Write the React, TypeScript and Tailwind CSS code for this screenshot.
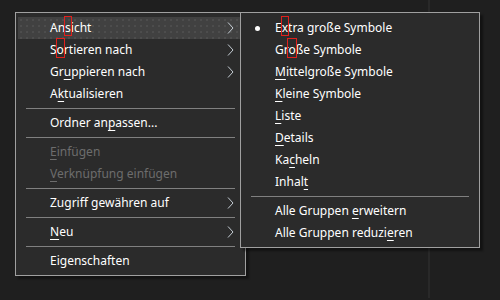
type Item =
	| { sep: true }
	| {
			sep?: false
			label: string
			key?: number
			marked?: boolean
			sub?: boolean
			disabled?: boolean
			active?: boolean
			bullet?: boolean
	  }

const mainItems: Item[] = [
	{ label: "Ansicht", key: 2, marked: true, sub: true, active: true },
	{ label: "Sortieren nach", key: 1, marked: true, sub: true },
	{ label: "Gruppieren nach", key: 2, sub: true },
	{ label: "Aktualisieren", key: 1 },
	{ sep: true },
	{ label: "Ordner anpassen...", key: 9 },
	{ sep: true },
	{ label: "Einfügen", key: 0, disabled: true },
	{ label: "Verknüpfung einfügen", key: 0, disabled: true },
	{ sep: true },
	{ label: "Zugriff gewähren auf", sub: true },
	{ sep: true },
	{ label: "Neu", key: 0, sub: true },
	{ sep: true },
	{ label: "Eigenschaften" },
]

const viewItems: Item[] = [
	{ label: "Extra große Symbole", key: 1, marked: true, bullet: true },
	{ label: "Große Symbole", key: 2, marked: true },
	{ label: "Mittelgroße Symbole", key: 0 },
	{ label: "Kleine Symbole", key: 0 },
	{ label: "Liste", key: 0 },
	{ label: "Details", key: 0 },
	{ label: "Kacheln", key: 2 },
	{ label: "Inhalt", key: 5 },
	{ sep: true },
	{ label: "Alle Gruppen erweitern", key: 13 },
	{ label: "Alle Gruppen reduzieren", key: 19 },
]

function Chevron() {
	return (
		<svg width="7" height="12" viewBox="0 0 7 12" className="ml-auto">
			<path d="M1 0.5 L6 6 L1 11.5" fill="none" stroke="#c4ccd4" strokeWidth="1" />
		</svg>
	)
}

function Label({ text, k, marked }: { text: string; k?: number; marked?: boolean }) {
	if (k === undefined) return <span>{text}</span>
	const ch = text[k]
	return (
		<span>
			{text.slice(0, k)}
			<span className="relative underline decoration-1 underline-offset-[3px]">
				{ch}
				{marked && (
					<span className="absolute -left-[1px] -right-[1px] top-[-3px] h-[20px] border border-[#e0201c]" />
				)}
			</span>
			{text.slice(k + 1)}
		</span>
	)
}

function Menu({ items }: { items: Item[] }) {
	return (
		<div className="flex flex-col bg-[#2b2b2b] border border-[#a0a0a0] px-[2px] pt-[4px] pb-[3px] shadow-[3px_3px_2px_rgba(0,0,0,0.4)]">
			{items.map((it, i) =>
				it.sep ? (
					<div key={i} className="mx-[8px] my-[3px] h-px bg-[#808080]" />
				) : (
					<div
						key={i}
						className={
							"flex h-[22px] items-center pr-[9px] " +
							(it.active
								? "bg-[#414141] bg-[radial-gradient(#5a5a5a_0.6px,transparent_0.8px)] bg-[length:6px_6px] "
								: "") +
							(it.disabled ? "text-[#6d6d6d]" : "text-white")
						}
					>
						<span className="flex w-[32px] shrink-0 justify-center pr-[3px]">
							{it.bullet && <span className="h-[5px] w-[5px] rounded-full bg-white" />}
						</span>
						<Label text={it.label} k={it.key} marked={it.marked} />
						{it.sub && <Chevron />}
					</div>
				),
			)}
		</div>
	)
}

export default function App() {
	return (
		<div className="relative h-[300px] w-[500px] overflow-hidden bg-[#1f1f1f] font-['Noto_Sans',sans-serif] text-[12px] leading-[16px]">
			<div className="absolute left-[428px] top-0 h-[298px] w-[2px] bg-[#292929]" />
			<div className="absolute left-[15px] top-[12px] w-[231px]">
				<Menu items={mainItems} />
			</div>
			<div className="absolute left-[240px] top-[12px] w-[240px]">
				<Menu items={viewItems} />
			</div>
		</div>
	)
}
